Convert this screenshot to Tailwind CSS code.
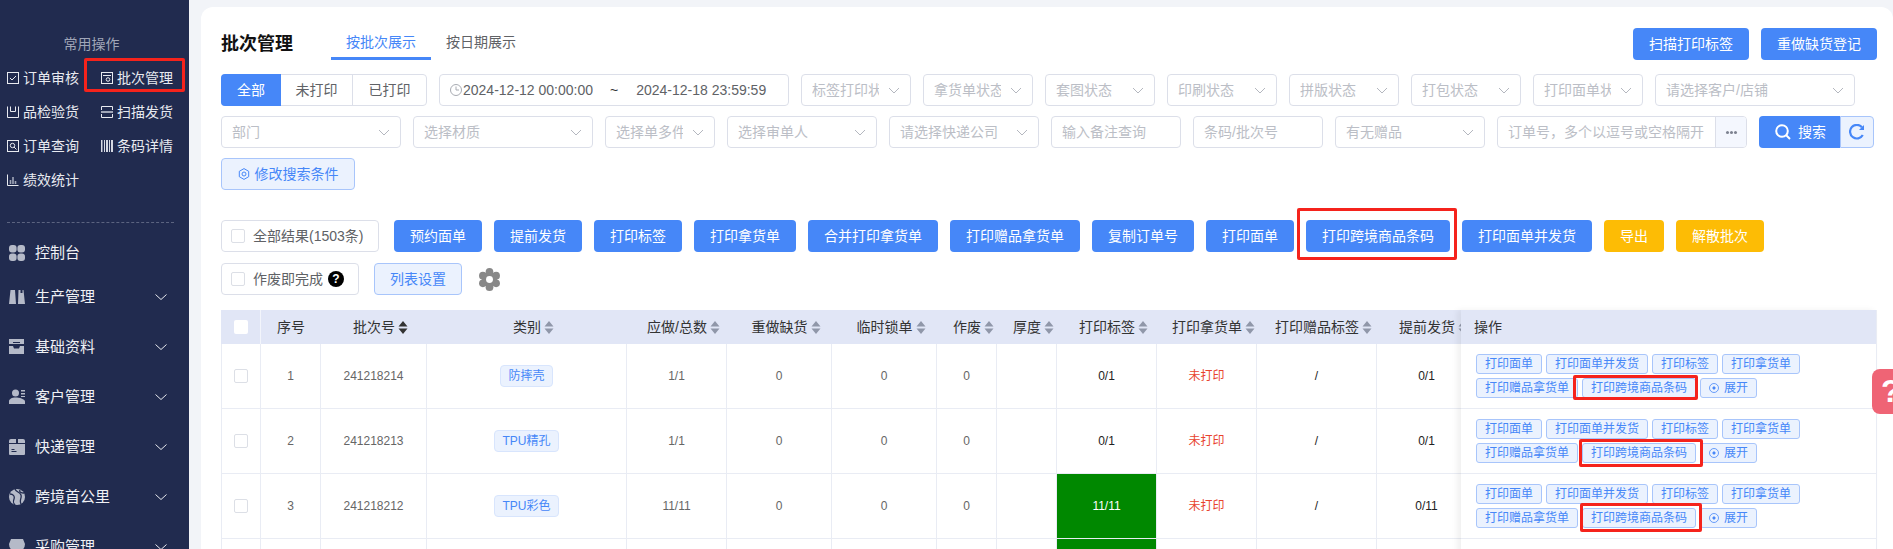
<!DOCTYPE html>
<html lang="zh">

<head>
  <meta charset="UTF-8" />
  <title>批次管理</title>
  <script src="https://cdn.jsdelivr.net/npm/@tailwindcss/browser@4"></script>
</head>

<body class="relative w-[1893px] h-[549px] overflow-hidden flex bg-[#f2f4f8] font-['Liberation_Sans','Noto_Sans_CJK_SC',sans-serif]">
  <!-- 侧边栏 -->
  <aside class="w-[189px] h-[549px] shrink-0 overflow-hidden bg-[#212b4f] text-white">
    <div class="mt-[34px] h-5 leading-5 text-center text-sm text-[#a0a6b8] pr-[6px] pl-0">常用操作</div>
    <div class="mt-[7px] pl-[7px] grid grid-cols-[94px_88px] text-sm">
      <div class="h-[34px] flex items-center gap-1 text-[#e8eaf0]">
        <svg class="w-3 h-3" viewBox="0 0 12 12" fill="none" stroke="#e8eaf0"><rect x=".5" y=".5" width="11" height="11"/><path d="M3 6l2 2 4-4"/></svg>
        订单审核
      </div>
      <div class="relative h-[34px] flex items-center gap-1 text-[#e8eaf0]">
        <svg class="w-3 h-3" viewBox="0 0 12 12" fill="none" stroke="#e8eaf0"><rect x=".5" y=".5" width="11" height="11"/><path d="M2 3.5h8"/><circle cx="7" cy="7.5" r="1.8"/></svg>
        批次管理
        <span class="absolute left-[-17px] right-[4px] top-[-3px] bottom-[3px] border-[3px] border-[#f5231c] rounded-[2px]"></span>
      </div>
      <div class="h-[34px] flex items-center gap-1 text-[#e8eaf0]">
        <svg class="w-3 h-3" viewBox="0 0 12 12" fill="none" stroke="#e8eaf0"><path d="M.5 .5v11h11V.5M3.5 .5v5h5V.5"/></svg>
        品检验货
      </div>
      <div class="h-[34px] flex items-center gap-1 text-[#e8eaf0]">
        <svg class="w-3 h-3" viewBox="0 0 12 12" fill="none" stroke="#e8eaf0"><path d="M.5 4V.5h11V4M.5 8v3.5h11V8"/><path d="M0 6h12" stroke-width="2" stroke="#a0a6b8"/></svg>
        扫描发货
      </div>
      <div class="h-[34px] flex items-center gap-1 text-[#e8eaf0]">
        <svg class="w-3 h-3" viewBox="0 0 12 12" fill="none" stroke="#e8eaf0"><rect x=".5" y=".5" width="11" height="11"/><circle cx="5.5" cy="5.5" r="2.2"/><path d="M7 7l2.5 2.5"/></svg>
        订单查询
      </div>
      <div class="h-[34px] flex items-center gap-1 text-[#e8eaf0]">
        <svg class="w-3 h-3" viewBox="0 0 12 12" fill="#d5d8e2"><rect x="0" width="1.5" height="12"/><rect x="3" width="1" height="12"/><rect x="5" width="2" height="12"/><rect x="8" width="1" height="12"/><rect x="10" width="2" height="12"/></svg>
        条码详情
      </div>
      <div class="h-[34px] flex items-center gap-1 text-[#e8eaf0]">
        <svg class="w-3 h-3" viewBox="0 0 12 12" fill="none" stroke="#e8eaf0"><path d="M.5 .5v11h11"/><path d="M3.5 10V6M6 10V3M8.5 10V7" stroke-width="1.6" stroke="#a0a6b8"/></svg>
        绩效统计
      </div>
    </div>
    <div class="mt-[25px] ml-[7px] w-[167px] border-t border-dashed border-[#5c6480]"></div>

    <div class="mt-[11px] h-[38px] pl-[9px] flex items-center gap-[10px] text-[15px] text-[#f0f1f5]">
      <svg class="w-4 h-4" viewBox="0 0 16 16" fill="#b5bac8"><rect width="7.6" height="7.6" rx="3"/><rect x="8.4" width="7.6" height="7.6" rx="3"/><rect y="8.4" width="7.6" height="7.6" rx="3"/><rect x="8.4" y="8.4" width="7.6" height="7.6" rx="3"/></svg>
      控制台
    </div>
    <div class="h-[50px] pl-[9px] pr-[22px] flex items-center gap-[10px] text-[15px] text-[#f0f1f5]">
      <svg class="w-4 h-4" viewBox="0 0 16 16" fill="#b5bac8"><path d="M1.5 1H6l1 14H0zM9.500 1h2v3h2V1h1l1.500 14H9z"/></svg>
      <span class="flex-1">生产管理</span>
      <svg class="w-3 h-3" viewBox="0 0 12 12" fill="none" stroke="#e8eaf0"><path d="M.5 3.500L6 8.500l5.500-5"/></svg>
    </div>
    <div class="h-[50px] pl-[9px] pr-[22px] flex items-center gap-[10px] text-[15px] text-[#f0f1f5]">
      <svg class="w-4 h-4" viewBox="0 0 16 16" fill="#b5bac8"><path d="M0 0h15v5H0zM0 7h4l1 2.500h5L11 7h4v8H0z"/><path d="M4 3h7v1H4z" fill="#212b4f"/></svg>
      <span class="flex-1">基础资料</span>
      <svg class="w-3 h-3" viewBox="0 0 12 12" fill="none" stroke="#e8eaf0"><path d="M.5 3.500L6 8.500l5.500-5"/></svg>
    </div>
    <div class="h-[50px] pl-[9px] pr-[22px] flex items-center gap-[10px] text-[15px] text-[#f0f1f5]">
      <svg class="w-4 h-4" viewBox="0 0 16 16" fill="#b5bac8"><circle cx="6.500" cy="4" r="3.500"/><path d="M0 15v-2.500C0 10 3 8.500 6.500 8.500S16 10 16 12.500V15zM12 1h4v1.500h-4zM12 4h4v1.500h-4zM12 7h4v1h-4z"/></svg>
      <span class="flex-1">客户管理</span>
      <svg class="w-3 h-3" viewBox="0 0 12 12" fill="none" stroke="#e8eaf0"><path d="M.5 3.500L6 8.500l5.500-5"/></svg>
    </div>
    <div class="h-[50px] pl-[9px] pr-[22px] flex items-center gap-[10px] text-[15px] text-[#f0f1f5]">
      <svg class="w-4 h-4" viewBox="0 0 16 16" fill="#b5bac8"><path d="M2 0h5v4H0V2a2 2 0 012-2zM9 0h5a2 2 0 012 2v2H9zM0 5h16v10a1 1 0 01-1 1H1a1 1 0 01-1-1z"/><path d="M2.500 10h3v1h-3zM2.500 12h5v1h-5z" fill="#212b4f"/></svg>
      <span class="flex-1">快递管理</span>
      <svg class="w-3 h-3" viewBox="0 0 12 12" fill="none" stroke="#e8eaf0"><path d="M.5 3.500L6 8.500l5.500-5"/></svg>
    </div>
    <div class="h-[50px] pl-[9px] pr-[22px] flex items-center gap-[10px] text-[15px] text-[#f0f1f5]">
      <svg class="w-4 h-4" viewBox="0 0 16 16" fill="#b5bac8"><circle cx="8" cy="8" r="8"/><path d="M1 5c3 0 5 2 4 5s-1 4 1 6M6 0c1 3 5 3 6 6s-2 5 0 9M11 1c-1 2 1 3 4 3" fill="none" stroke="#212b4f" stroke-width="1.300"/></svg>
      <span class="flex-1">跨境首公里</span>
      <svg class="w-3 h-3" viewBox="0 0 12 12" fill="none" stroke="#e8eaf0"><path d="M.5 3.500L6 8.500l5.500-5"/></svg>
    </div>
    <div class="h-[50px] pl-[9px] pr-[22px] flex items-center gap-[10px] text-[15px] text-[#f0f1f5]">
      <svg class="w-4 h-4" viewBox="0 0 16 16" fill="#b5bac8"><path d="M2 0h12l2 5a2.500 2.500 0 01-16 0zM1.500 9h13v7h-13z"/></svg>
      <span class="flex-1">采购管理</span>
      <svg class="w-3 h-3" viewBox="0 0 12 12" fill="none" stroke="#e8eaf0"><path d="M.5 3.500L6 8.500l5.500-5"/></svg>
    </div>
  </aside>

  <!-- 主内容 -->
  <main class="flex-1 min-w-0 pl-3 pt-[7px]">
    <div class="h-[542px] overflow-hidden bg-white rounded-tl-xl rounded-tr-xl pt-[21px] pl-5 pr-4 text-sm">
      <!-- 标题和标签页 -->
      <div class="flex items-center h-8">
        <h1 class="w-[110px] text-lg font-bold text-[#111]">批次管理</h1>
        <div class="w-[100px] h-8 leading-[29px] text-center text-[#4687f8] border-b-[3px] border-[#4687f8]">按批次展示</div>
        <div class="w-[100px] h-8 leading-[29px] text-center text-[#606266]">按日期展示</div>
        <div class="ml-auto flex gap-3">
          <button class="w-[116px] h-8 rounded bg-[#4687f8] text-white">扫描打印标签</button>
          <button class="w-[116px] h-8 rounded bg-[#4687f8] text-white">重做缺货登记</button>
        </div>
      </div>

      <!-- 筛选第一行 -->
      <div class="mt-[14px] flex gap-3 h-8">
        <div class="flex w-[206px] border border-[#dcdfe9] rounded text-[#606266]">
          <div class="w-[60px] -m-px mr-0 rounded-l bg-[#4687f8] text-white flex items-center justify-center">全部</div>
          <div class="w-[72px] border-r border-[#dcdfe9] flex items-center justify-center">未打印</div>
          <div class="flex-1 flex items-center justify-center">已打印</div>
        </div>
        <div class="w-[350px] border border-[#dcdfe9] rounded flex items-center pl-[10px] text-[#606266] whitespace-nowrap">
          <svg class="w-3 h-3 shrink-0" viewBox="0 0 12 12" fill="none" stroke="#a8abb2"><circle cx="6" cy="6" r="5.500"/><path d="M6 2.500V6h3"/></svg>
          <span class="w-[130px] ml-px overflow-hidden">2024-12-12 00:00:00</span>
          <span class="ml-[17px] text-[#303133]">~</span>
          <span class="ml-[18px]">2024-12-18 23:59:59</span>
        </div>
        <div class="w-[110px] border border-[#dcdfe9] rounded flex items-center pl-[10px] pr-[10px] text-[#bbbec6]"><span class="flex-1 overflow-hidden whitespace-nowrap mr-[9px]">标签打印状态</span><svg class="w-3 h-3 shrink-0" viewBox="0 0 12 12" fill="none" stroke="#b4b7bf"><path d="M1 4l5 5 5-5"/></svg></div>
        <div class="w-[110px] border border-[#dcdfe9] rounded flex items-center pl-[10px] pr-[10px] text-[#bbbec6]"><span class="flex-1 overflow-hidden whitespace-nowrap mr-[9px]">拿货单状态</span><svg class="w-3 h-3 shrink-0" viewBox="0 0 12 12" fill="none" stroke="#b4b7bf"><path d="M1 4l5 5 5-5"/></svg></div>
        <div class="w-[110px] border border-[#dcdfe9] rounded flex items-center pl-[10px] pr-[10px] text-[#bbbec6]"><span class="flex-1 overflow-hidden whitespace-nowrap mr-[9px]">套图状态</span><svg class="w-3 h-3 shrink-0" viewBox="0 0 12 12" fill="none" stroke="#b4b7bf"><path d="M1 4l5 5 5-5"/></svg></div>
        <div class="w-[110px] border border-[#dcdfe9] rounded flex items-center pl-[10px] pr-[10px] text-[#bbbec6]"><span class="flex-1 overflow-hidden whitespace-nowrap mr-[9px]">印刷状态</span><svg class="w-3 h-3 shrink-0" viewBox="0 0 12 12" fill="none" stroke="#b4b7bf"><path d="M1 4l5 5 5-5"/></svg></div>
        <div class="w-[110px] border border-[#dcdfe9] rounded flex items-center pl-[10px] pr-[10px] text-[#bbbec6]"><span class="flex-1 overflow-hidden whitespace-nowrap mr-[9px]">拼版状态</span><svg class="w-3 h-3 shrink-0" viewBox="0 0 12 12" fill="none" stroke="#b4b7bf"><path d="M1 4l5 5 5-5"/></svg></div>
        <div class="w-[110px] border border-[#dcdfe9] rounded flex items-center pl-[10px] pr-[10px] text-[#bbbec6]"><span class="flex-1 overflow-hidden whitespace-nowrap mr-[9px]">打包状态</span><svg class="w-3 h-3 shrink-0" viewBox="0 0 12 12" fill="none" stroke="#b4b7bf"><path d="M1 4l5 5 5-5"/></svg></div>
        <div class="w-[110px] border border-[#dcdfe9] rounded flex items-center pl-[10px] pr-[10px] text-[#bbbec6]"><span class="flex-1 overflow-hidden whitespace-nowrap mr-[9px]">打印面单状态</span><svg class="w-3 h-3 shrink-0" viewBox="0 0 12 12" fill="none" stroke="#b4b7bf"><path d="M1 4l5 5 5-5"/></svg></div>
        <div class="w-[200px] border border-[#dcdfe9] rounded flex items-center pl-[10px] pr-[10px] text-[#bbbec6]"><span class="flex-1 overflow-hidden whitespace-nowrap mr-[9px]">请选择客户/店铺</span><svg class="w-3 h-3 shrink-0" viewBox="0 0 12 12" fill="none" stroke="#b4b7bf"><path d="M1 4l5 5 5-5"/></svg></div>
      </div>

      <!-- 筛选第二行 -->
      <div class="mt-[10px] flex gap-3 h-8 text-[#bbbec6]">
        <div class="w-[180px] border border-[#dcdfe9] rounded flex items-center pl-[10px] pr-[10px]"><span class="flex-1 overflow-hidden whitespace-nowrap mr-[9px]">部门</span><svg class="w-3 h-3 shrink-0" viewBox="0 0 12 12" fill="none" stroke="#b4b7bf"><path d="M1 4l5 5 5-5"/></svg></div>
        <div class="w-[180px] border border-[#dcdfe9] rounded flex items-center pl-[10px] pr-[10px]"><span class="flex-1 overflow-hidden whitespace-nowrap mr-[9px]">选择材质</span><svg class="w-3 h-3 shrink-0" viewBox="0 0 12 12" fill="none" stroke="#b4b7bf"><path d="M1 4l5 5 5-5"/></svg></div>
        <div class="w-[110px] border border-[#dcdfe9] rounded flex items-center pl-[10px] pr-[10px]"><span class="flex-1 overflow-hidden whitespace-nowrap mr-[9px]">选择单多件</span><svg class="w-3 h-3 shrink-0" viewBox="0 0 12 12" fill="none" stroke="#b4b7bf"><path d="M1 4l5 5 5-5"/></svg></div>
        <div class="w-[150px] border border-[#dcdfe9] rounded flex items-center pl-[10px] pr-[10px]"><span class="flex-1 overflow-hidden whitespace-nowrap mr-[9px]">选择审单人</span><svg class="w-3 h-3 shrink-0" viewBox="0 0 12 12" fill="none" stroke="#b4b7bf"><path d="M1 4l5 5 5-5"/></svg></div>
        <div class="w-[150px] border border-[#dcdfe9] rounded flex items-center pl-[10px] pr-[10px]"><span class="flex-1 overflow-hidden whitespace-nowrap mr-[9px]">请选择快递公司</span><svg class="w-3 h-3 shrink-0" viewBox="0 0 12 12" fill="none" stroke="#b4b7bf"><path d="M1 4l5 5 5-5"/></svg></div>
        <div class="w-[130px] border border-[#dcdfe9] rounded flex items-center pl-[10px]">输入备注查询</div>
        <div class="w-[130px] border border-[#dcdfe9] rounded flex items-center pl-[10px]">条码/批次号</div>
        <div class="w-[150px] border border-[#dcdfe9] rounded flex items-center pl-[10px] pr-[10px]"><span class="flex-1 overflow-hidden whitespace-nowrap mr-[9px]">有无赠品</span><svg class="w-3 h-3 shrink-0" viewBox="0 0 12 12" fill="none" stroke="#b4b7bf"><path d="M1 4l5 5 5-5"/></svg></div>
        <div class="w-[250px] border border-[#dcdfe9] rounded flex items-center overflow-hidden">
          <span class="flex-1 pl-[10px] whitespace-nowrap overflow-hidden">订单号，多个以逗号或空格隔开</span>
          <span class="w-[31px] h-full shrink-0 bg-[#f4f7fe] border-l border-[#dcdfe9] flex items-center justify-center gap-px">
            <i class="w-[3px] h-[3px] rounded-full bg-[#7d8290]"></i><i class="w-[3px] h-[3px] rounded-full bg-[#7d8290]"></i><i class="w-[3px] h-[3px] rounded-full bg-[#7d8290]"></i>
          </span>
        </div>
        <div class="flex">
          <button class="w-[81px] h-8 rounded-l bg-[#4687f8] text-white flex items-center pl-4 gap-[7px]">
            <svg class="w-4 h-4" viewBox="0 0 16 16" fill="none" stroke="#fff" stroke-width="2"><circle cx="7" cy="7" r="5.800"/><path d="M11 11l4 4"/></svg>
            搜索
          </button>
          <button class="w-[34px] h-8 rounded-r bg-[#ebf2fe] border border-[#a8c5fb] flex items-center justify-center">
            <svg class="w-4 h-4" viewBox="0 0 16 16" fill="none" stroke="#4687f8" stroke-width="2.200"><path d="M13.800 11A6.800 6.800 0 1113 3.200"/><path d="M15 1v5h-5z" fill="#4687f8" stroke="none"/></svg>
          </button>
        </div>
      </div>

      <!-- 修改搜索条件 -->
      <div class="mt-[10px]">
        <button class="w-[134px] h-8 rounded bg-[#ebf2fe] border border-[#a8c5fb] text-[#4687f8] flex items-center justify-center gap-[5px]">
          <svg class="w-3 h-3" viewBox="0 0 12 12" fill="none" stroke="#4687f8"><path d="M6 .6l4.700 2.700v5.400L6 11.400 1.300 8.700V3.300z"/><circle cx="6" cy="6" r="2"/></svg>
          修改搜索条件
        </button>
      </div>

      <!-- 批量操作 -->
      <div class="mt-[30px] flex h-8 gap-3 text-white">
        <label class="w-[158px] mr-[3px] border border-[#dcdfe9] rounded flex items-center pl-[9px] gap-2 text-[#606266] whitespace-nowrap">
          <span class="w-[14px] h-[14px] border border-[#dcdfe6] rounded-[2px]"></span>全部结果(1503条)
        </label>
        <button class="w-[88px] rounded bg-[#4687f8]">预约面单</button>
        <button class="w-[88px] rounded bg-[#4687f8]">提前发货</button>
        <button class="w-[88px] rounded bg-[#4687f8]">打印标签</button>
        <button class="w-[102px] rounded bg-[#4687f8]">打印拿货单</button>
        <button class="w-[130px] rounded bg-[#4687f8]">合并打印拿货单</button>
        <button class="w-[130px] rounded bg-[#4687f8]">打印赠品拿货单</button>
        <button class="w-[102px] rounded bg-[#4687f8]">复制订单号</button>
        <button class="w-[88px] rounded bg-[#4687f8]">打印面单</button>
        <button class="relative w-[144px] rounded bg-[#4687f8]">打印跨境商品条码
          <span class="absolute left-[-9px] right-[-7px] top-[-12px] bottom-[-8px] border-[3px] border-[#f5231c] rounded-[2px]"></span>
        </button>
        <button class="w-[130px] rounded bg-[#4687f8]">打印面单并发货</button>
        <button class="w-[60px] rounded bg-[#fdbc05]">导出</button>
        <button class="w-[88px] rounded bg-[#fdbc05]">解散批次</button>
      </div>
      <div class="mt-[11px] flex items-center h-8">
        <label class="w-[138px] h-8 border border-[#dcdfe9] rounded flex items-center pl-[9px] gap-2 text-[#606266]">
          <span class="w-[14px] h-[14px] border border-[#dcdfe6] rounded-[2px]"></span>作废即完成
          <span class="w-4 h-4 -ml-[3px] rounded-full bg-black text-white text-xs font-bold flex items-center justify-center">?</span>
        </label>
        <button class="ml-[15px] w-[88px] h-8 rounded bg-[#ebf2fe] border border-[#a8c5fb] text-[#4687f8]">列表设置</button>
        <svg class="ml-[16px] w-[23px] h-[23px]" viewBox="0 0 24 24"><g fill="#888"><circle cx="12" cy="12" r="8"/><circle cx="12" cy="4" r="4"/><circle cx="18.900" cy="8" r="4"/><circle cx="18.900" cy="16" r="4"/><circle cx="12" cy="20" r="4"/><circle cx="5.100" cy="16" r="4"/><circle cx="5.100" cy="8" r="4"/></g><circle cx="12" cy="12" r="3.600" fill="#fff"/></svg>
      </div>

      <!-- 表格 -->
      <div class="mt-[15px] flex w-[1656px]">
        <div class="w-[1240px] shrink-0 overflow-hidden">
          <table class="table-fixed w-[1256px] border-separate border-spacing-0 text-xs text-[#666]">
            <colgroup>
              <col class="w-[40px]" /><col class="w-[60px]" /><col class="w-[106px]" /><col class="w-[200px]" /><col class="w-[100px]" /><col class="w-[105px]" /><col class="w-[105px]" /><col class="w-[60px]" /><col class="w-[60px]" /><col class="w-[100px]" /><col class="w-[100px]" /><col class="w-[120px]" /><col class="w-[100px]" />
            </colgroup>
            <thead class="text-sm font-normal text-[#333] bg-[#e1e6f6]">
              <tr class="h-[34px]">
                <th class="font-normal border-r border-white/60"><span class="block w-[14px] h-[14px] mx-auto bg-white rounded-[2px]"></span></th>
                <th class="font-normal">序号</th>
                <th class="font-normal pl-[13px]"><span class="inline-flex items-center gap-[3px] whitespace-nowrap">批次号<svg class="w-[10px] h-[13px]" viewBox="0 0 10 13" fill="#333"><path d="M5 0l4.500 5.500h-9zM5 13l4.500-5.500h-9z"/></svg></span></th>
                <th class="font-normal pl-[13px]"><span class="inline-flex items-center gap-[3px] whitespace-nowrap">类别<svg class="w-[10px] h-[13px]" viewBox="0 0 10 13" fill="#9097a9"><path d="M5 0l4.500 5.500h-9zM5 13l4.500-5.500h-9z"/></svg></span></th>
                <th class="font-normal pl-[13px]"><span class="inline-flex items-center gap-[3px] whitespace-nowrap">应做/总数<svg class="w-[10px] h-[13px]" viewBox="0 0 10 13" fill="#9097a9"><path d="M5 0l4.500 5.500h-9zM5 13l4.500-5.500h-9z"/></svg></span></th>
                <th class="font-normal pl-[13px]"><span class="inline-flex items-center gap-[3px] whitespace-nowrap">重做缺货<svg class="w-[10px] h-[13px]" viewBox="0 0 10 13" fill="#9097a9"><path d="M5 0l4.500 5.500h-9zM5 13l4.500-5.500h-9z"/></svg></span></th>
                <th class="font-normal pl-[13px]"><span class="inline-flex items-center gap-[3px] whitespace-nowrap">临时锁单<svg class="w-[10px] h-[13px]" viewBox="0 0 10 13" fill="#9097a9"><path d="M5 0l4.500 5.500h-9zM5 13l4.500-5.500h-9z"/></svg></span></th>
                <th class="font-normal pl-[13px]"><span class="inline-flex items-center gap-[3px] whitespace-nowrap">作废<svg class="w-[10px] h-[13px]" viewBox="0 0 10 13" fill="#9097a9"><path d="M5 0l4.500 5.500h-9zM5 13l4.500-5.500h-9z"/></svg></span></th>
                <th class="font-normal pl-[13px]"><span class="inline-flex items-center gap-[3px] whitespace-nowrap">厚度<svg class="w-[10px] h-[13px]" viewBox="0 0 10 13" fill="#9097a9"><path d="M5 0l4.500 5.500h-9zM5 13l4.500-5.500h-9z"/></svg></span></th>
                <th class="font-normal pl-[13px]"><span class="inline-flex items-center gap-[3px] whitespace-nowrap">打印标签<svg class="w-[10px] h-[13px]" viewBox="0 0 10 13" fill="#9097a9"><path d="M5 0l4.500 5.500h-9zM5 13l4.500-5.500h-9z"/></svg></span></th>
                <th class="font-normal pl-[13px]"><span class="inline-flex items-center gap-[3px] whitespace-nowrap">打印拿货单<svg class="w-[10px] h-[13px]" viewBox="0 0 10 13" fill="#9097a9"><path d="M5 0l4.500 5.500h-9zM5 13l4.500-5.500h-9z"/></svg></span></th>
                <th class="font-normal pl-[13px]"><span class="inline-flex items-center gap-[3px] whitespace-nowrap">打印赠品标签<svg class="w-[10px] h-[13px]" viewBox="0 0 10 13" fill="#9097a9"><path d="M5 0l4.500 5.500h-9zM5 13l4.500-5.500h-9z"/></svg></span></th>
                <th class="font-normal pl-[13px]"><span class="inline-flex items-center gap-[3px] whitespace-nowrap">提前发货<svg class="w-[10px] h-[13px]" viewBox="0 0 10 13" fill="#9097a9"><path d="M5 0l4.500 5.500h-9zM5 13l4.500-5.500h-9z"/></svg></span></th>
              </tr>
            </thead>
            <tbody class="text-center [&_td]:border-r [&_td]:border-b [&_td]:border-[#e9ecf4] [&_td:first-child]:border-l">
              <tr class="h-[65px]">
                <td><span class="block w-[14px] h-[14px] mx-auto border border-[#dcdfe6] rounded-[2px]"></span></td>
                <td>1</td><td>241218214</td>
                <td><span class="inline-block h-[22px] leading-5 px-[7px] rounded bg-[#ebf2fe] border border-[#d8e5fd] text-[#4687f8]">防摔壳</span></td>
                <td>1/1</td><td>0</td><td>0</td><td>0</td><td></td>
                <td class="text-[#222]">0/1</td><td class="text-[#e8432e]">未打印</td><td class="text-[#222]">/</td><td class="text-[#222]">0/1</td>
              </tr>
              <tr class="h-[65px]">
                <td><span class="block w-[14px] h-[14px] mx-auto border border-[#dcdfe6] rounded-[2px]"></span></td>
                <td>2</td><td>241218213</td>
                <td><span class="inline-block h-[22px] leading-5 px-[7px] rounded bg-[#ebf2fe] border border-[#d8e5fd] text-[#4687f8]">TPU精孔</span></td>
                <td>1/1</td><td>0</td><td>0</td><td>0</td><td></td>
                <td class="text-[#222]">0/1</td><td class="text-[#e8432e]">未打印</td><td class="text-[#222]">/</td><td class="text-[#222]">0/1</td>
              </tr>
              <tr class="h-[65px]">
                <td><span class="block w-[14px] h-[14px] mx-auto border border-[#dcdfe6] rounded-[2px]"></span></td>
                <td>3</td><td>241218212</td>
                <td><span class="inline-block h-[22px] leading-5 px-[7px] rounded bg-[#ebf2fe] border border-[#d8e5fd] text-[#4687f8]">TPU彩色</span></td>
                <td>11/11</td><td>0</td><td>0</td><td>0</td><td></td>
                <td class="bg-[#008800] text-white">11/11</td><td class="text-[#e8432e]">未打印</td><td class="text-[#222]">/</td><td class="text-[#222]">0/11</td>
              </tr>
              <tr class="h-[65px]">
                <td></td><td></td><td></td><td></td><td></td><td></td><td></td><td></td><td></td>
                <td class="bg-[#008800]"></td><td></td><td></td><td></td>
              </tr>
            </tbody>
          </table>
        </div>

        <!-- 固定的操作列 -->
        <div class="w-[416px] shrink-0 bg-white shadow-[-4px_0_6px_rgba(0,0,0,0.06)] text-xs text-[#4687f8] border-r border-[#e9ecf4]">
          <div class="h-[34px] leading-[34px] pl-[13px] bg-[#e1e6f6] text-sm text-[#333]">操作</div>
          <div class="h-[65px] pt-[10px] pl-[15px] border-b border-[#e9ecf4]">
            <div class="w-[330px] flex flex-wrap gap-1">
              <button class="h-5 px-2 rounded-[3px] bg-[#ebf2fe] border border-[#a8c5fb]">打印面单</button>
              <button class="h-5 px-2 rounded-[3px] bg-[#ebf2fe] border border-[#a8c5fb]">打印面单并发货</button>
              <button class="h-5 px-2 rounded-[3px] bg-[#ebf2fe] border border-[#a8c5fb]">打印标签</button>
              <button class="h-5 px-2 rounded-[3px] bg-[#ebf2fe] border border-[#a8c5fb]">打印拿货单</button>
              <button class="h-5 px-2 rounded-[3px] bg-[#ebf2fe] border border-[#a8c5fb]">打印赠品拿货单</button>
              <button class="relative h-5 px-2 rounded-[3px] bg-[#ebf2fe] border border-[#a8c5fb]">打印跨境商品条码
                <span class="absolute left-[-10px] right-[-3px] top-[-4px] bottom-[-3px] border-[3px] border-[#f5231c] rounded-[2px]"></span>
              </button>
              <button class="h-5 px-2 rounded-[3px] bg-[#ebf2fe] border border-[#a8c5fb] flex items-center gap-[5px]"><svg class="w-[10px] h-[10px]" viewBox="0 0 10 10" fill="none" stroke="#4687f8" stroke-width=".8"><circle cx="5" cy="5" r="4.500"/><circle cx="5" cy="5" r="1.200" fill="#4687f8"/></svg>展开</button>
            </div>
          </div>
          <div class="h-[65px] pt-[10px] pl-[15px] border-b border-[#e9ecf4]">
            <div class="w-[330px] flex flex-wrap gap-1">
              <button class="h-5 px-2 rounded-[3px] bg-[#ebf2fe] border border-[#a8c5fb]">打印面单</button>
              <button class="h-5 px-2 rounded-[3px] bg-[#ebf2fe] border border-[#a8c5fb]">打印面单并发货</button>
              <button class="h-5 px-2 rounded-[3px] bg-[#ebf2fe] border border-[#a8c5fb]">打印标签</button>
              <button class="h-5 px-2 rounded-[3px] bg-[#ebf2fe] border border-[#a8c5fb]">打印拿货单</button>
              <button class="h-5 px-2 rounded-[3px] bg-[#ebf2fe] border border-[#a8c5fb]">打印赠品拿货单</button>
              <button class="relative h-5 px-2 rounded-[3px] bg-[#ebf2fe] border border-[#a8c5fb]">打印跨境商品条码
                <span class="absolute left-[-4px] right-[-8px] top-[-5px] bottom-[-5px] border-[3px] border-[#f5231c] rounded-[2px]"></span>
              </button>
              <button class="h-5 px-2 rounded-[3px] bg-[#ebf2fe] border border-[#a8c5fb] flex items-center gap-[5px]"><svg class="w-[10px] h-[10px]" viewBox="0 0 10 10" fill="none" stroke="#4687f8" stroke-width=".8"><circle cx="5" cy="5" r="4.500"/><circle cx="5" cy="5" r="1.200" fill="#4687f8"/></svg>展开</button>
            </div>
          </div>
          <div class="h-[65px] pt-[10px] pl-[15px] border-b border-[#e9ecf4]">
            <div class="w-[330px] flex flex-wrap gap-1">
              <button class="h-5 px-2 rounded-[3px] bg-[#ebf2fe] border border-[#a8c5fb]">打印面单</button>
              <button class="h-5 px-2 rounded-[3px] bg-[#ebf2fe] border border-[#a8c5fb]">打印面单并发货</button>
              <button class="h-5 px-2 rounded-[3px] bg-[#ebf2fe] border border-[#a8c5fb]">打印标签</button>
              <button class="h-5 px-2 rounded-[3px] bg-[#ebf2fe] border border-[#a8c5fb]">打印拿货单</button>
              <button class="h-5 px-2 rounded-[3px] bg-[#ebf2fe] border border-[#a8c5fb]">打印赠品拿货单</button>
              <button class="relative h-5 px-2 rounded-[3px] bg-[#ebf2fe] border border-[#a8c5fb]">打印跨境商品条码
                <span class="absolute left-[-3px] right-[-7px] top-[-6px] bottom-[-5px] border-[3px] border-[#f5231c] rounded-[2px]"></span>
              </button>
              <button class="h-5 px-2 rounded-[3px] bg-[#ebf2fe] border border-[#a8c5fb] flex items-center gap-[5px]"><svg class="w-[10px] h-[10px]" viewBox="0 0 10 10" fill="none" stroke="#4687f8" stroke-width=".8"><circle cx="5" cy="5" r="4.500"/><circle cx="5" cy="5" r="1.200" fill="#4687f8"/></svg>展开</button>
            </div>
          </div>
        </div>
      </div>
    </div>
  </main>

  <!-- 帮助悬浮按钮 -->
  <div class="absolute right-0 top-[369px] w-[21px] h-[45px] overflow-hidden rounded-l-lg bg-[#ef6475] text-white text-[32px] leading-[45px] font-bold pl-[9px]">?</div>
</body>

</html>
